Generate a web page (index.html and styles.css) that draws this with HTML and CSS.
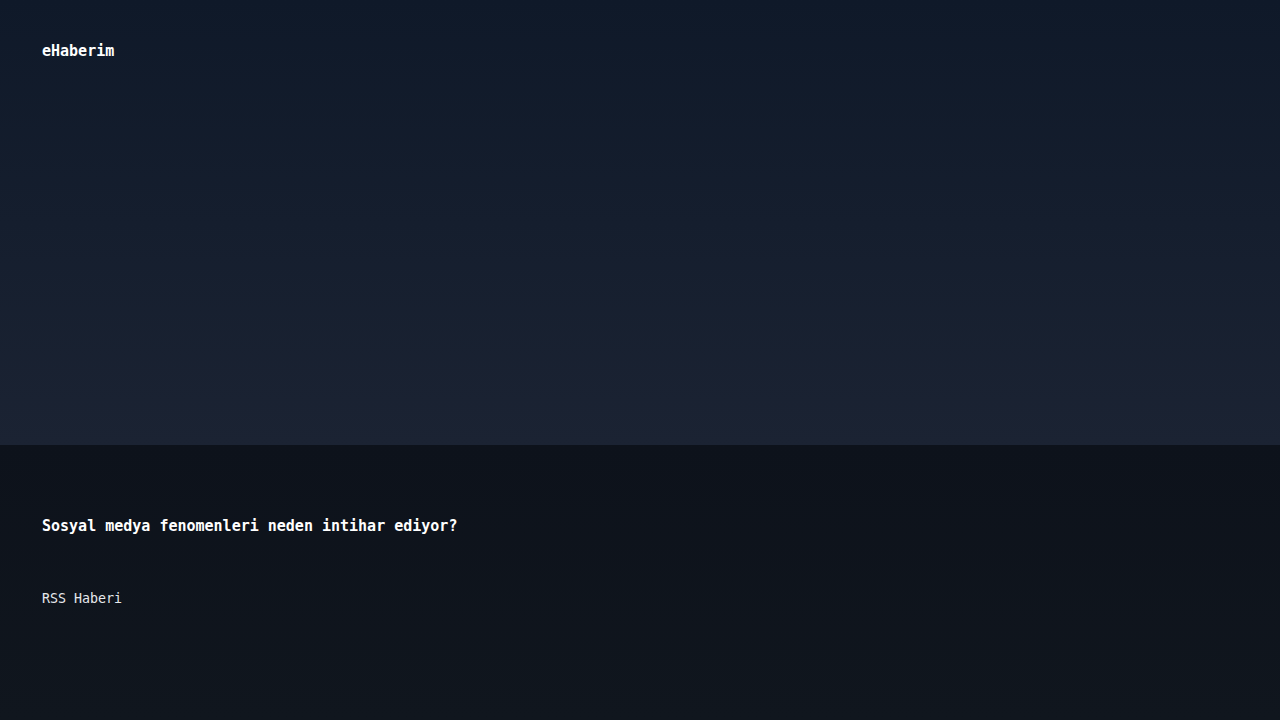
FILE: index.html
```html
<!DOCTYPE html>
<html lang="tr">
<head>
<meta charset="utf-8">
<title>eHaberim</title>
<link rel="stylesheet" href="styles.css">
</head>
<body>
<div class="page">
  <header class="hero">
    <span class="brand">eHaberim</span>
  </header>
  <main class="article">
    <h1 class="article-title">Sosyal medya fenomenleri neden intihar ediyor?</h1>
    <p class="article-source">RSS Haberi</p>
  </main>
</div>
</body>
</html>
```
FILE: styles.css
```css
html, body {
  margin: 0;
  padding: 0;
  background: #0e131b;
}
.page {
  width: 1280px;
  height: 720px;
  display: flex;
  flex-direction: column;
  overflow: hidden;
  font-family: "DejaVu Sans Mono", "Liberation Mono", monospace;
  color: #ffffff;
}
.hero {
  height: 445px;
  flex: none;
  box-sizing: border-box;
  padding: 41px 42px 0;
  background: linear-gradient(180deg, #0f1929 0%, #1b2333 100%);
}
.brand {
  display: block;
  font-size: 15px;
  font-weight: 700;
  line-height: 20px;
}
.article {
  flex: 1;
  padding: 0 42px;
  background: linear-gradient(180deg, #0d121b 0%, #10161e 100%);
}
.article-title {
  margin: 72px 0 0;
  font-size: 15px;
  font-weight: 700;
  line-height: 18px;
}
.article-source {
  margin: 55px 0 0;
  font-size: 13.3px;
  font-weight: 400;
  line-height: 18px;
  color: #e6e8ec;
}
```
